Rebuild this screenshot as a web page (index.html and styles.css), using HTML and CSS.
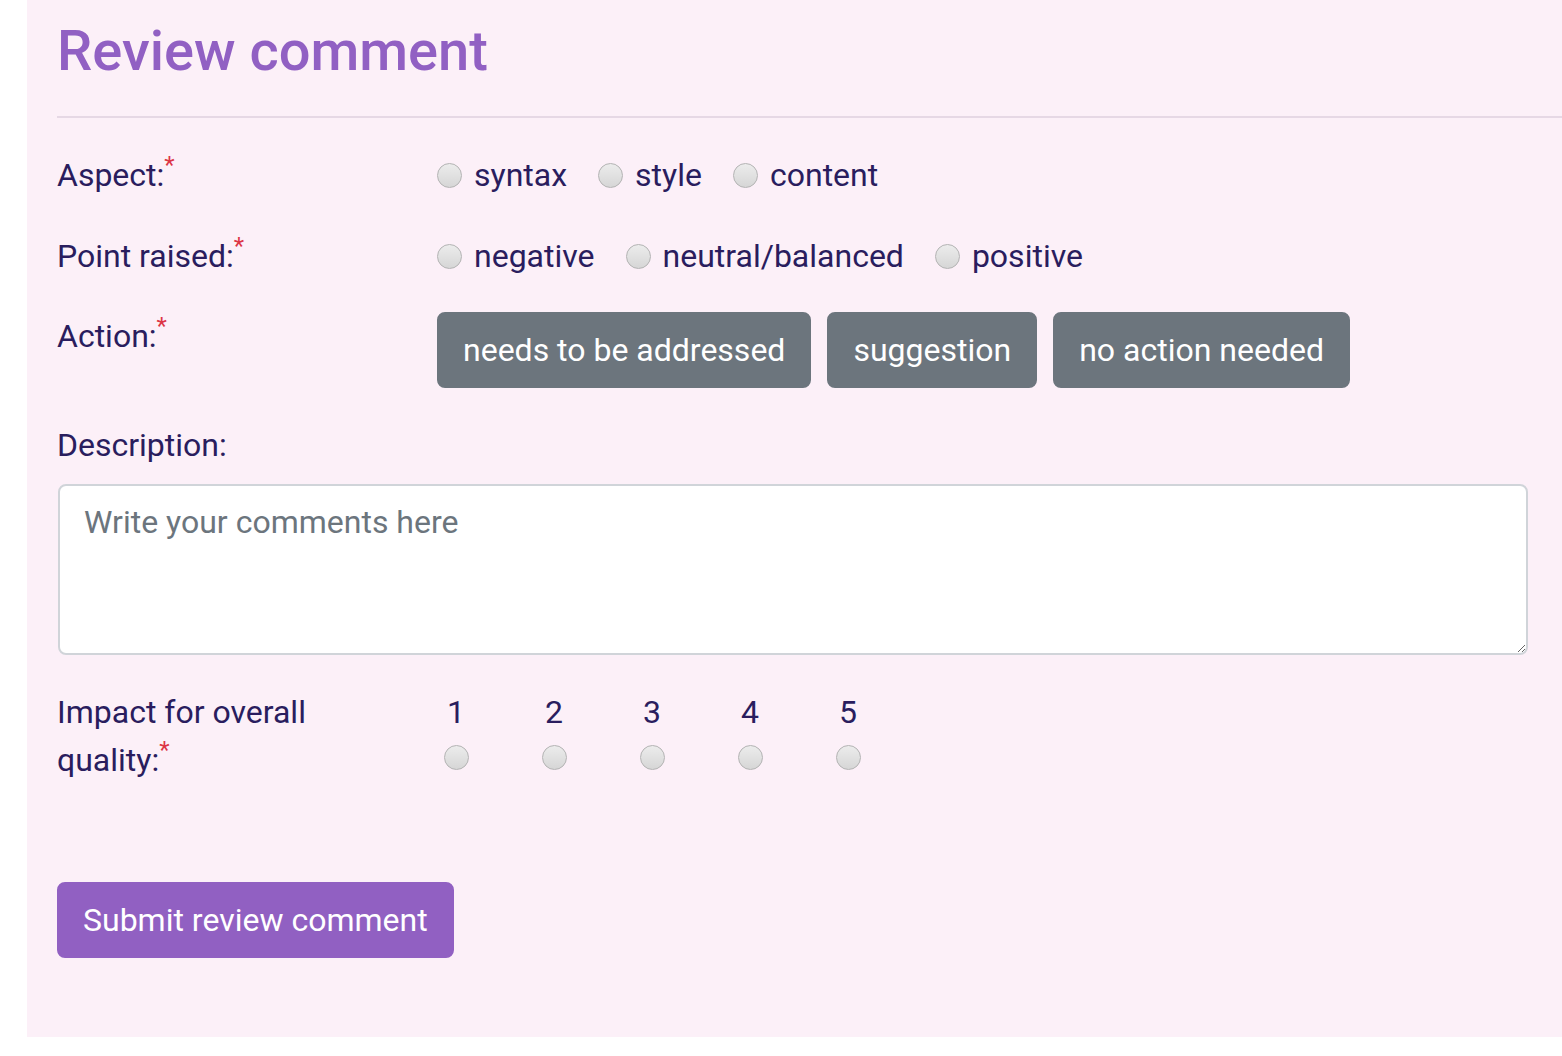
FILE: index.html
```html
<!DOCTYPE html>
<html lang="en">
<head>
<meta charset="utf-8">
<title>Review comment</title>
<link rel="stylesheet" href="styles.css">
</head>
<body>
<div class="panel">
  <h1 class="title">Review comment</h1>
  <hr class="rule">
  <form class="form">
    <div class="row">
      <label class="label">Aspect:<sup class="req">*</sup></label>
      <div class="options">
        <label class="opt"><input type="radio" name="aspect" class="radio"><span>syntax</span></label>
        <label class="opt"><input type="radio" name="aspect" class="radio"><span>style</span></label>
        <label class="opt"><input type="radio" name="aspect" class="radio"><span>content</span></label>
      </div>
    </div>
    <div class="row">
      <label class="label">Point raised:<sup class="req">*</sup></label>
      <div class="options">
        <label class="opt"><input type="radio" name="point" class="radio"><span>negative</span></label>
        <label class="opt"><input type="radio" name="point" class="radio"><span>neutral/balanced</span></label>
        <label class="opt"><input type="radio" name="point" class="radio"><span>positive</span></label>
      </div>
    </div>
    <div class="row row-action">
      <label class="label">Action:<sup class="req">*</sup></label>
      <div class="buttons">
        <button type="button" class="btn btn-gray">needs to be addressed</button>
        <button type="button" class="btn btn-gray">suggestion</button>
        <button type="button" class="btn btn-gray">no action needed</button>
      </div>
    </div>
    <div class="block">
      <label class="label label-block">Description:</label>
      <textarea class="textarea" placeholder="Write your comments here"></textarea>
    </div>
    <div class="row row-impact">
      <label class="label">Impact for overall quality:<sup class="req">*</sup></label>
      <div class="scale">
        <label class="scale-item"><span>1</span><input type="radio" name="impact" class="radio"></label>
        <label class="scale-item"><span>2</span><input type="radio" name="impact" class="radio"></label>
        <label class="scale-item"><span>3</span><input type="radio" name="impact" class="radio"></label>
        <label class="scale-item"><span>4</span><input type="radio" name="impact" class="radio"></label>
        <label class="scale-item"><span>5</span><input type="radio" name="impact" class="radio"></label>
      </div>
    </div>
    <button type="button" class="btn btn-purple">Submit review comment</button>
  </form>
</div>
</body>
</html>
```

FILE: styles.css
```css
html, body {
  margin: 0;
  padding: 0;
  background: #ffffff;
}
body {
  font-family: Roboto, "Liberation Sans", sans-serif;
  font-size: 32px;
  line-height: 48px;
  color: #2a1d5e;
}
.panel {
  margin-left: 27px;
  background: #fcf0f8;
  padding: 18px 34px 79px 30px;
  overflow: hidden;
}
.title {
  margin: 0;
  font-size: 56px;
  font-weight: 500;
  line-height: 1.2;
  color: #9160c3;
}
.rule {
  margin: 31px -34px 33px 0;
  border: 0;
  border-top: 2px solid #e6d8e5;
  height: 0;
}
.form {
  margin: 0;
}
.row {
  display: grid;
  grid-template-columns: 350px 1fr;
  column-gap: 30px;
  margin-bottom: 33px;
}
.row-action {
  margin-top: -1px;
  margin-bottom: 33px;
}
.label {
  display: block;
}
.req {
  color: #dc3545;
  font-size: 24px;
  line-height: 0;
  position: relative;
  top: -2px;
  vertical-align: super;
}
.options {
  display: flex;
  align-items: center;
  height: 48px;
}
.opt {
  display: flex;
  align-items: center;
  margin-right: 31px;
}
.radio {
  appearance: none;
  -webkit-appearance: none;
  width: 25px;
  height: 25px;
  margin: 0 12px 0 0;
  border-radius: 50%;
  border: 1px solid #b3b3b3;
  background: linear-gradient(#ececec, #d6d6d6);
  box-sizing: border-box;
  flex: none;
}
.buttons {
  display: flex;
  gap: 16px;
}
.btn {
  font-family: inherit;
  font-size: 32px;
  line-height: 48px;
  padding: 12px 24px;
  border: 2px solid transparent;
  border-radius: 8px;
  color: #ffffff;
  cursor: pointer;
}
.btn-gray {
  background: #6c757d;
  border-color: #6c757d;
}
.btn-purple {
  background: #9160c2;
  border-color: #9160c2;
  margin-top: 98px;
}
.block {
  margin-bottom: 33px;
}
.label-block {
  margin-bottom: 15px;
}
.textarea {
  display: block;
  width: 100%;
  height: 171px;
  box-sizing: border-box;
  font-family: inherit;
  font-size: 32px;
  line-height: 48px;
  padding: 12px 24px;
  border: 2px solid #d0d4d9;
  border-radius: 8px;
  background: #ffffff;
  color: #495057;
  margin: 0 0 0 1px;
  width: calc(100% - 1px);
}
.textarea::placeholder {
  color: #6c757d;
  opacity: 1;
}
.row-impact {
  margin-bottom: 0;
}
.scale {
  display: flex;
  gap: 60px;
}
.scale-item {
  width: 38px;
  display: flex;
  flex-direction: column;
  align-items: center;
}
.scale-item .radio {
  margin: 9px 0 0 0;
}
```
